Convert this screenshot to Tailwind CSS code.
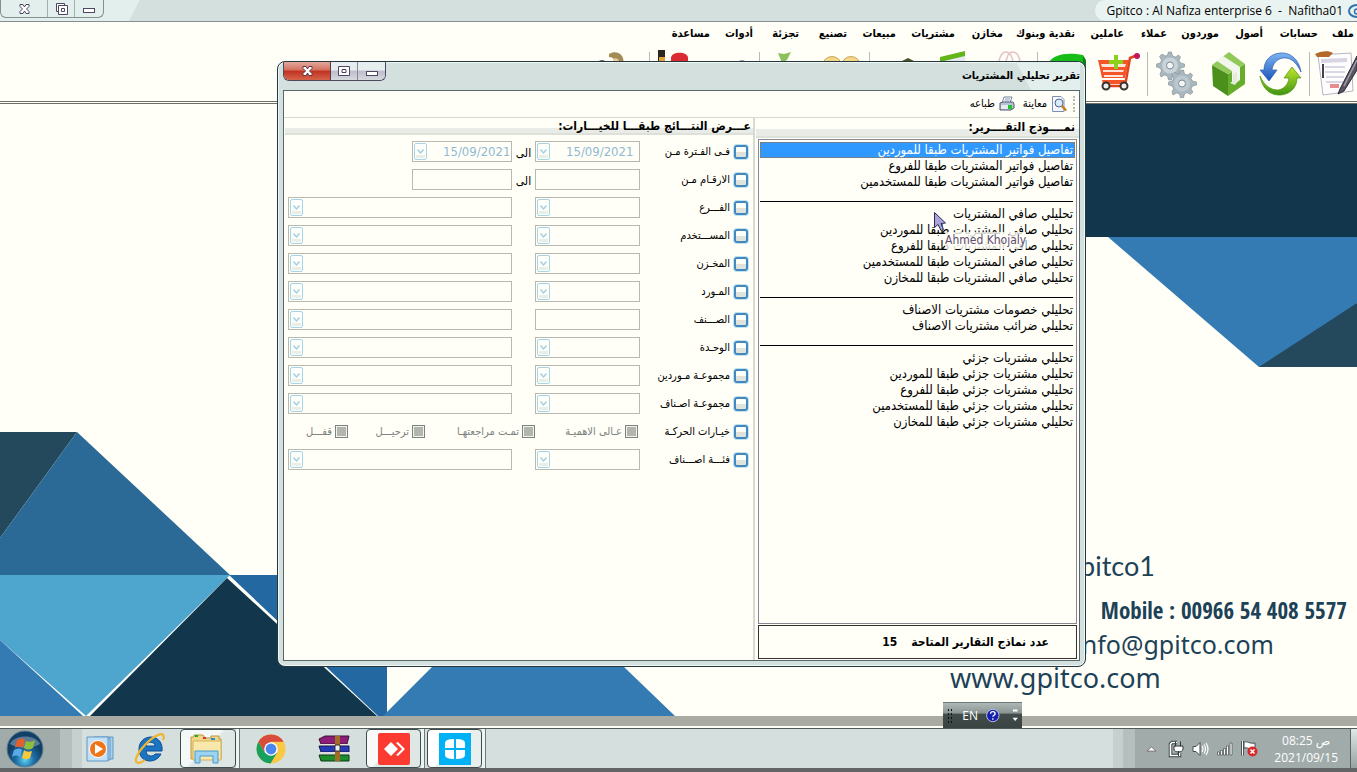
<!DOCTYPE html>
<html lang="ar">
<head>
<meta charset="utf-8">
<title>Gpitco</title>
<script src="https://cdn.jsdelivr.net/npm/@tailwindcss/browser@4"></script>
</head>
<body class="relative flex h-screen flex-col overflow-hidden bg-[#fffff8] font-['DejaVu_Sans_Condensed','DejaVu_Sans',sans-serif] text-black">

<svg class="hidden">
  <symbol id="chev" viewBox="0 0 13 17"><rect x=".5" y=".5" width="12" height="16" rx="1.5" fill="#fdfffa" stroke="#a9d3e6"/><rect x="2" y="12" width="9" height="3" fill="#e9eee6"/><path d="M3.5 6.5l3 3.500 3-3.500" fill="none" stroke="#a3cbe0" stroke-width="1.300"/></symbol>
</svg>

<!-- main window title bar -->
<header class="flex h-[22px] shrink-0 items-start justify-between border-b border-[#84908f] bg-[linear-gradient(117deg,#e3efed_0,#e3efed_124px,#d4e0de_125px)]">
  <div class="flex h-[18px] w-[104px] rounded-b-md border border-t-0 border-[#84908f] bg-[#e3efed]">
    <button aria-label="إغلاق" class="grid w-[47px] place-items-center border-r border-[#a3afae]"><svg width="11" height="10" viewBox="0 0 11 10"><path d="M1 .5h3L5.500 3 7 .5h3v2L7.500 5 10 7.500v2H7L5.500 7 4 9.500H1v-2L3.500 5 1 2.500z" fill="#fff" stroke="#4f4661"/></svg></button>
    <button aria-label="استعادة" class="grid w-[27px] place-items-center border-r border-[#a3afae]"><svg width="13" height="12" viewBox="0 0 13 12" fill="#fff" stroke="#4f4661"><path d="M1.500.5h8v8h-8z"/><path d="M3.500 2.500h9v9h-9z"/><path d="M6.500 5.500h3v3h-3z"/></svg></button>
    <button aria-label="تصغير" class="grid flex-1 place-items-center pt-1"><svg width="12" height="5" viewBox="0 0 12 5"><rect x=".5" y=".5" width="11" height="4" fill="#fff" stroke="#4f4661"/></svg></button>
  </div>
  <div class="flex h-[21px] items-center gap-1 rounded-l-full bg-[#e9f3f1] pl-3 font-['Open_Sans',sans-serif] text-xs">
    <span class="whitespace-pre">Gpitco : Al Nafiza enterprise 6  -  Nafitha01</span>
    <svg width="10" height="16" viewBox="0 0 10 16"><path d="M10 2C5 2 2 5 2 8s3 6 8 6" fill="none" stroke="#2f74ad" stroke-width="2"/><path d="M10 6a2.500 2.500 0 0 0 0 5" fill="none" stroke="#2f74ad" stroke-width="1.500"/></svg>
  </div>
</header>

<!-- menu -->
<nav dir="rtl" class="flex h-[24px] shrink-0 items-center pr-[3px] text-[11px] leading-4 font-bold whitespace-nowrap font-['DejaVu_Sans_Condensed','DejaVu_Sans',sans-serif]">
  <button class="w-9 text-right">ملف</button><button class="w-[55px] text-right">حسابات</button><button class="w-11 text-right">أصول</button><button class="w-[52px] text-right">موردون</button><button class="w-[43px] text-right">عملاء</button><button class="w-[49px] text-right">عاملين</button><button class="w-[72px] text-right">نقدية وبنوك</button><button class="w-12 text-right">مخازن</button><button class="w-[59px] text-right">مشتريات</button><button class="w-[49px] text-right">مبيعات</button><button class="w-12 text-right">تصنيع</button><button class="w-[46px] text-right">تجزئة</button><button class="w-[43px] text-right">أدوات</button><button class="text-right">مساعدة</button>
</nav>

<!-- toolbar -->
<div dir="rtl" class="flex h-[58px] shrink-0 items-start overflow-hidden border-b-3 border-double border-[#6e716b] pt-1">
  <button aria-label="تقرير" class="w-11 shrink-0"><svg width="44" height="48" viewBox="0 0 44 48"><path d="M5 5l33-2 2 38-30 4z" fill="#fdfdfd" stroke="#b9b5c4"/><path d="M8 9l26-1v4l-26 1z" fill="#d8d4e2"/><path d="M12 17h20M12 22h20M13 27h18M13 32h17" stroke="#b5b2c8"/><path d="M10 14v14" stroke="#44404e" stroke-width="2"/><rect x="17" y="34" width="9" height="4" fill="#e78d92"/><path d="M2 4c5-3 14-4 18-1l-4 4H4z" fill="#b4692b"/><path d="M44 6L27 39l-2 5 6-3L44 20z" fill="#5a5562" stroke="#2d2933"/><path d="M44 10L31 36" stroke="#a29dab" stroke-width="1.500"/></svg></button>
  <i class="mx-0.5 mt-0.5 h-11 w-0.5 shrink-0 border-l border-[#b5bbb6]"></i>
  <button aria-label="تحديث" class="grid w-[52px] shrink-0 place-items-center"><svg width="44" height="48" viewBox="0 0 44 48"><defs><linearGradient id="bl" x2="0" y2="1"><stop stop-color="#7db5f2"/><stop offset="1" stop-color="#1c54b8"/></linearGradient><linearGradient id="gr" x2="0" y2="1"><stop stop-color="#c0e62c"/><stop offset="1" stop-color="#3f9410"/></linearGradient></defs><path d="M42 22C40 9 31 2 21 3 11 4 5 11 5 20H1l9 11 8-11h-5c1-7 5-11 11-12 8-1 14 5 18 14z" fill="url(#bl)" stroke="#2a5fb4" stroke-width=".7"/><path d="M1 26c2 13 11 20 21 19 10-1 16-8 16-17h4L33 17l-8 11h5c-1 7-5 11-11 12C11 40 5 35 1 26z" fill="url(#gr)" stroke="#4c9413" stroke-width=".7"/></svg></button>
  <button aria-label="أصناف" class="grid w-[52px] shrink-0 place-items-center"><svg width="36" height="48" viewBox="0 0 36 48"><path d="M1 15L17 24V46L2 36z" fill="#4b901d"/><path d="M17 24L34 14v20L17 46z" fill="#65ad2a"/><path d="M1 15L18 2l16 12-17 10z" fill="#92c95b"/><path d="M6 11l6-5 17 11v13l-4 3-1-1-3 2v-13z" fill="#f2f6ec"/><path d="M22 24l4-2v8l3-2-5 7-5-2 3-2z" fill="#e4ecd9"/></svg></button>
  <button aria-label="إعدادات" class="grid w-[52px] shrink-0 place-items-center"><svg width="42" height="48" viewBox="0 0 42 48"><g fill="#a9b7be" stroke="#7c8b94" stroke-width=".6"><path id="gear" d="M12.500 2h3l1 4 3 1 3-2 2 2-1.500 3.500 1.500 2.500 4 1v3l-4 1-1.500 3 2 3-2.500 2.500-3.500-2-2.500 1.500-1 4h-3l-1-4-3-1-3.500 2L4 24l1.500-3.500L4 18l-3.500-1v-3l4-1 1-3-2-3.500L6 4l3.500 2L11.500 5z"/><use href="#gear" x="12" y="18"/></g><circle cx="14" cy="15.500" r="8" fill="#c9d3d8"/><circle cx="14" cy="15.500" r="3.500" fill="#f3f6f6" stroke="#7c8b94"/><circle cx="26" cy="33.500" r="8" fill="#bcc8ce"/><circle cx="26" cy="33.500" r="3.500" fill="#f3f6f6" stroke="#7c8b94"/></svg></button>
  <i class="mx-0.5 mt-0.5 h-11 w-0.5 shrink-0 border-l border-[#b5bbb6]"></i>
  <button aria-label="مشتريات" class="grid w-[52px] shrink-0 place-items-center"><svg width="44" height="48" viewBox="0 0 44 48"><path d="M38 6l-5 2-5 28H6" fill="none" stroke="#e2431c" stroke-width="2.500"/><path d="M1 10h31l-4 18H5z" fill="#f4552a"/><path d="M4 14h25l-1 3H5zM6 20h21l-1 2H6zM7 25h19v2H7z" fill="#fde5d8"/><path d="M17 5h4v5h5v4h-5v5h-4v-5h-5v-4h5z" fill="#8bd01c"/><path d="M5 30h23v4H6z" fill="#f4552a"/><circle cx="40" cy="6" r="3" fill="#c2185b"/><g fill="#eee" stroke="#3b3030" stroke-width="2"><circle cx="9" cy="36" r="3.500"/><circle cx="27" cy="36" r="3.500"/></g></svg></button>
  <button aria-label="شحن" class="grid w-[52px] shrink-0 place-items-center"><svg width="40" height="48" viewBox="0 0 40 48"><path d="M2 12C7 5 18 2 36 5l3 5v18H2z" fill="#16bd16"/><path d="M36 6l3 5v18h-3z" fill="#0c7d16"/></svg></button>
  <i class="mx-0.5 mt-0.5 h-11 w-0.5 shrink-0 border-l border-[#b5bbb6]"></i>
  <button aria-label="مبيعات" class="grid w-[54px] shrink-0 place-items-center"><svg width="38" height="48" viewBox="0 0 38 48"><path d="M2 11h34v25H2z" fill="#c5454f"/><path d="M10 14c0-16 14-16 14 0M17 14c0-16 14-16 14 0" fill="none" stroke="#e3c4c8" stroke-width="1.500"/></svg></button>
  <button aria-label="فواتير" class="grid w-[54px] shrink-0 place-items-center"><svg width="44" height="48" viewBox="0 0 44 48"><path d="M8 9l25-5 2 30H8z" fill="#e6e9ee"/><path d="M8 7l25-6v5L8 12z" fill="#63b51a"/></svg></button>
  <button aria-label="قيود" class="grid w-[54px] shrink-0 place-items-center"><svg width="40" height="48" viewBox="0 0 40 48"><path d="M20 12l8-4 6 3v10H20z" fill="#4b5426"/></svg></button>
  <i class="mx-0.5 mt-0.5 h-11 w-0.5 shrink-0 border-l border-[#b5bbb6]"></i>
  <button aria-label="عملاء" class="grid w-[52px] shrink-0 place-items-center"><svg width="40" height="48" viewBox="0 0 40 48"><g fill="#f4d78a" stroke="#caa457"><circle cx="11" cy="16" r="9.500"/><circle cx="30" cy="16" r="9.500"/></g></svg></button>
  <button aria-label="تجزئة" class="grid w-[52px] shrink-0 place-items-center"><svg width="40" height="48" viewBox="0 0 40 48"><path d="M9 3l6 1 7-2-4 8-5 3z" fill="#8cc05c"/></svg></button>
  <i class="mx-0.5 mt-0.5 h-11 w-0.5 shrink-0 border-l border-[#b5bbb6]"></i>
  <button aria-label="أدوات" class="grid w-[52px] shrink-0 place-items-center"><svg width="40" height="48" viewBox="0 0 40 48"><circle cx="31" cy="15" r="5" fill="#8aa4a8"/></svg></button>
  <button aria-label="موظفون" class="grid w-[52px] shrink-0 place-items-center"><svg width="44" height="48" viewBox="0 0 44 48"><path d="M1 0h7v14H1z" fill="#2b2622"/><path d="M2 7h6v6H2z" fill="#dda23a"/><path d="M14 8c0-7 17-7 17 0v6H14z" fill="#dc2a32"/></svg></button>
  <i class="mx-0.5 mt-0.5 h-11 w-0.5 shrink-0 border-l border-[#b5bbb6]"></i>
  <button aria-label="مستخدم" class="grid w-[64px] shrink-0 place-items-center"><svg width="44" height="48" viewBox="0 0 44 48"><path d="M16 4c8-5 17 1 14 12h-7c0-6-3-9-7-9z" fill="#a28b55"/><path d="M20 9c3-2 7 0 7 6h-6z" fill="#edc9a1"/><circle cx="9" cy="14" r="4" fill="#5e6264"/></svg></button>
</div>

<!-- wallpaper -->
<main class="relative min-h-0 flex-1 overflow-hidden">
  <svg class="block h-full w-full" viewBox="0 104 1357 612" preserveAspectRatio="none" shape-rendering="geometricPrecision">
    <path d="M1000 104h357v133h-357z" fill="#12364b"/>
    <path d="M1108 237h249v66l-70 64h-28z" fill="#357bb3"/>
    <path d="M1000 237h107l-20 0z" fill="#12364b"/>
    <path d="M1357 303v64h-98z" fill="#24485c"/>
    <path d="M1357 303l-54 64h-16z" fill="#24485c"/>
    <path d="M0 432h77L0 538z" fill="#24485c"/>
    <path d="M77 432l153 143H0v-37z" fill="#2b6a97"/>
    <path d="M0 575h230L86 716 0 640z" fill="#4ea5ce"/>
    <path d="M0 640l83 76H0z" fill="#357bb3"/>
    <path d="M229 575h158v141h-9z" fill="#2368a0"/>
    <path d="M227 578l150 138H90z" fill="#12364b"/>
    <path d="M433 666h190l52 50H383z" fill="#357bb3"/>
  </svg>
  <div class="absolute inset-y-0 right-0 w-[407px] overflow-hidden font-['Noto_Sans',sans-serif] whitespace-nowrap text-[#1d4257]">
    <p class="absolute top-[442px] left-[116px] font-['Lato',sans-serif] text-[27px] leading-10">gpitco1</p>
    <p class="absolute top-[486px] right-[10px] font-['Open_Sans_Condensed','Noto_Sans_Condensed','Open_Sans',sans-serif] text-[23px] leading-10">Mobile : 00966 54 408 5577</p>
    <p class="absolute top-[520px] right-[83px] text-[25px] leading-10">info@gpitco.com</p>
    <p class="absolute top-[554px] left-0 text-[27px] leading-10">www.gpitco.com</p>
  </div>
</main>
<div class="h-2.5 shrink-0 bg-[#a9aba2]"></div>
<div class="h-0.5 shrink-0 bg-[#fffff8]"></div>

<!-- taskbar -->
<footer class="flex h-11 shrink-0 items-stretch justify-between border-t border-b-4 border-t-[#505a5a] border-b-[#626466] bg-[#d5e0de]">
  <div class="flex items-stretch">
    <button aria-label="ابدأ" class="grid w-[60px] place-items-center bg-[#a1acaa] pr-2.5"><svg width="38" height="38" viewBox="0 0 38 38"><defs><radialGradient id="orb" cx=".5" cy=".8"><stop stop-color="#5fd4f2"/><stop offset=".5" stop-color="#1f6ea4"/><stop offset="1" stop-color="#123f66"/></radialGradient></defs><circle cx="19" cy="19" r="18" fill="url(#orb)" stroke="#5d7f92"/><path d="M4 14C8 4 30 4 34 14c-8 5-22 5-30 0z" fill="#fff" opacity=".3"/><path d="M11 10c3-2 6-2 8 0l-2 8c-3-2-5-2-8 0z" fill="#e3602c"/><path d="M20 11c3 1 6 1 9-1l-2 8c-3 2-6 2-9 0z" fill="#8cbf3e"/><path d="M8 20c3-2 6-2 8 0l-2 7c-3-2-5-2-8 0z" fill="#5aa9e8"/><path d="M18 20c2 2 5 2 8 1l-2 7c-3 2-6 1-8 0z" fill="#f8c93c"/></svg></button>
    <i class="w-3 bg-[#b5bfbd]"></i><i class="w-2.5 bg-[#c6d1cf]"></i>
    <div class="flex items-center">
      <button aria-label="Media Player" class="grid w-[36px] place-items-center pr-3"><svg class="ml-1" width="30" height="30" viewBox="0 0 30 30"><g fill="#a8d1ef" stroke="#5f97c7"><path d="M8 3h19v22H8z"/><path d="M5 4h19v22H5z"/><path d="M1 3h21v24H1z" fill="#c3e0f4"/></g><circle cx="12" cy="15" r="8.500" fill="#ee7418" stroke="#fff"/><path d="M9 10l8 5-8 5z" fill="#fff"/></svg></button>
      <button aria-label="Internet Explorer" class="grid w-[64px] place-items-center"><svg width="34" height="34" viewBox="0 0 34 34"><path d="M28 22c-2 4-6 7-11 7C10 29 6 24 6 17S11 5 18 5c7 0 12 6 11 14H13c0 6 8 6 9 3zM13 14h9c0-5-9-5-9 0z" fill="#1b74c2" stroke="#0e4c91" fill-rule="evenodd"/><path d="M30 8c2-5 0-7-5-5C16 7 5 19 3 27c-1 5 4 5 9 1" fill="none" stroke="#f1b52b" stroke-width="2.200"/></svg></button>
    </div>
    <button aria-label="Explorer" class="-ml-0.5 grid w-[56px] place-items-center rounded-sm border border-[#3e4c4e] bg-[linear-gradient(135deg,#f4f8f6_45%,#dfe7e5_50%)] pr-1"><svg width="34" height="34" viewBox="0 0 34 34"><path d="M2 5h3V3h9l2 3h6V4h8v3h2v20H2z" fill="#f2d886" stroke="#b99540"/><path d="M4 9h28v19H4z" fill="#f9e8ab" stroke="#d3b25d"/><path d="M6 3h3v2H6z" fill="#27a627"/><path d="M14 5h3v2h-3z" fill="#d33"/><path d="M22 6h4v2h-4z" fill="#2c88d8"/><path d="M6 31V19h23v12h-5v-7H11v7z" fill="#9bd3f0" stroke="#4a9bcb"/></svg></button>
    <i class="w-1 border-r border-[#6f7b7b] bg-[#eef4f2]"></i>
    <button aria-label="Chrome" class="grid w-[62px] place-items-center"><svg width="32" height="32" viewBox="0 0 32 32"><circle cx="16" cy="16" r="14.500" fill="#fbc843"/><path d="M3.400 8.800A14.500 14.500 0 0 1 28.600 8.800H16L9.800 19.600z" fill="#d94b3d"/><path d="M3.400 8.800A14.500 14.500 0 0 0 15.500 30.500L22.200 19.600H9.800z" fill="#18a05e"/><circle cx="16" cy="16" r="6.800" fill="#fff"/><circle cx="16" cy="16" r="5.400" fill="#4a86f0"/></svg></button>
    <button aria-label="WinRAR" class="grid w-[64px] place-items-center"><svg width="34" height="28" viewBox="0 0 34 28"><path d="M2 4L8 1h24l-2 8H4z" fill="#8c1e78" stroke="#3b1034"/><path d="M3 9h29v5H3z" fill="#e8e2d6"/><path d="M2 11h30v6H4z" fill="#2839b8" stroke="#12184f"/><path d="M3 17h29v3H3z" fill="#ddd"/><path d="M2 20h30v6H4z" fill="#1d8c2c" stroke="#0b3d12"/><path d="M18 1h5v25h-5z" fill="#a36c24"/><path d="M18 10h5v6h-5z" fill="#eee" stroke="#333"/></svg></button>
    <button aria-label="AnyDesk" class="grid w-[55px] place-items-center rounded-sm border border-[#3e4c4e] bg-[linear-gradient(135deg,#f7faf9_45%,#dfe7e5_50%)]"><svg width="32" height="32" viewBox="0 0 32 32"><rect width="32" height="32" rx="2" fill="#fb3a31"/><path d="M13 9l7 7-7 7-7-7z" fill="#fff"/><path d="M18 10l2-1 7 7-7 7-2-1 6-6z" fill="#fff"/></svg></button>
    <i class="mr-1 w-1 border-r border-[#6f7b7b] bg-[#eef4f2]"></i>
    <button aria-label="Windows" class="-ml-0.5 grid w-[55px] place-items-center rounded-sm border border-[#3e4c4e] bg-[linear-gradient(135deg,#fff_45%,#e9efed_50%)]"><svg width="32" height="32" viewBox="0 0 32 32"><path d="M0 0h32v32H0z" fill="#00b2f5"/><path d="M6 10q0-4 9-4v9H6zM17 6q9 0 9 4v5h-9zM6 17h9v9q-9 0-9-4zM17 17h9v5q0 4-9 4z" fill="#fff"/></svg></button>
    <i class="w-1 border-r border-[#6f7b7b] bg-[#eef4f2]"></i>
  </div>
  <div class="flex items-stretch">
    <i class="w-2.5 bg-[#c6d1cf]"></i><i class="w-3 bg-[#b5bfbd]"></i>
    <div class="flex items-center gap-2 bg-[#a1acaa] pr-3 pl-3">
      <svg width="9" height="6" viewBox="0 0 9 6"><path d="M0 5l4.500-4L9 5z" fill="#fff" stroke="#5b5168" stroke-width=".7"/></svg>
      <svg class="ml-1" width="16" height="18" viewBox="0 0 16 18"><path d="M9 2.500H4L2.500 4v11.500h9V13" fill="none" stroke="#323a3c" stroke-width="3.500"/><path d="M9 2.500H4L2.500 4v11.500h9V13" fill="none" stroke="#fff" stroke-width="1.700"/><path d="M6 6h9v3c0 4-9 4-9 0zM7.500 1.500v5m5-5v5M10.500 11v5" fill="#fff" stroke="#323a3c"/></svg>
      <svg width="17" height="16" viewBox="0 0 17 16"><path d="M1 5.500h3l4-4v13l-4-4H1z" fill="#fff" stroke="#444e50"/><path d="M10 5q2 3 0 6M12 3.500q3 4.500 0 9M14 2q4 6 0 12" fill="none" stroke="#fff" stroke-width="1.200"/></svg>
      <svg width="16" height="14" viewBox="0 0 16 14"><g fill="#fff" stroke="#444e50" stroke-width=".7"><path d="M.5 10h2v3h-2zM3.500 8.500h2V13h-2zM6.500 6.500h2V13h-2zM9.500 4h2v9h-2zM13 1h2v12h-2z"/></g></svg>
      <svg width="17" height="17" viewBox="0 0 17 17"><path d="M1.500 1v14.500" stroke="#323a3c" stroke-width="2.500"/><path d="M1.500 1v14.500" stroke="#fff"/><path d="M3 2c4-1 5 2 11 1v6c-5 1-7-2-11-1z" fill="#fff" stroke="#444e50"/><circle cx="11.500" cy="11.500" r="5" fill="#d8292b"/><path d="M9.500 9.500l4 4m0-4l-4 4" stroke="#fff" stroke-width="1.500"/></svg>
      <div class="ml-2 text-center font-['Open_Sans','DejaVu_Sans',sans-serif] text-xs leading-[17px] text-white"><p dir="ltr">08:25 ص</p><p>2021/09/15</p></div>
    </div>
    <button aria-label="سطح المكتب" class="w-[7px] border-l border-[#5b6666] bg-[linear-gradient(#dfe8e6,#98a3a1)]"></button>
  </div>
</footer>

<!-- language bar -->
<div class="absolute bottom-11 left-[943px] flex h-[26px] w-[79px] items-center gap-2 border-t border-[#6d7879] bg-[linear-gradient(#aeb8b6_0,#8a9593_40%,#424c4b_45%,#394342)] px-1 font-['Open_Sans',sans-serif] text-xs text-white">
  <i class="h-4 w-2 bg-[radial-gradient(#0c1212_1px,transparent_1px)] bg-[length:3px_4px]"></i>
  <span>EN</span>
  <svg width="15" height="15" viewBox="0 0 15 15"><circle cx="7.500" cy="7.500" r="6.800" fill="#1420b0" stroke="#c3c9e8"/><path d="M5 5.500c0-3 5-3 5 0 0 2-2.500 1.500-2.500 3.500M7.500 10.500v1.700" fill="none" stroke="#fff" stroke-width="1.500"/></svg>
  <svg class="ml-1" width="7" height="15" viewBox="0 0 7 15" fill="#fff"><path d="M1 1h5v2H1zM.5 10h6l-3 3.500z"/></svg>
</div>

<!-- report dialog -->
<section dir="rtl" class="absolute top-[61px] left-[277px] flex h-[606px] w-[809px] flex-col rounded-lg border border-[#26383d] bg-[#d3e0de] px-[5px] pb-[5px] shadow-[inset_0_0_0_1px_#eef7f5]">
  <div class="flex h-7 shrink-0 items-start justify-between bg-[linear-gradient(62deg,transparent_0,transparent_660px,#e3efed_661px)]">
    <h1 class="pt-1.5 text-[11px] leading-4 font-bold">تقرير تحليلي المشتريات</h1>
    <div dir="ltr" class="flex h-[19px] w-[103px] overflow-hidden rounded-b-md border border-t-0 border-[#4c4a5e]">
      <button aria-label="إغلاق" class="grid w-[47px] place-items-center border-r border-[#5b3c46] bg-[linear-gradient(#e2a79b_0,#d4705f_45%,#bf3220_50%,#d5634b)]"><svg width="11" height="10" viewBox="0 0 11 10"><path d="M1 .5h3L5.500 3 7 .5h3v2L7.500 5 10 7.500v2H7L5.500 7 4 9.500H1v-2L3.500 5 1 2.500z" fill="#fff" stroke="#5b3a48"/></svg></button>
      <button aria-label="تكبير" class="grid w-[27px] place-items-center border-r border-[#8a8799] bg-[linear-gradient(#e6edee_45%,#bdbccb_50%,#d6dade)]"><svg width="12" height="10" viewBox="0 0 12 10" fill="#fff" stroke="#4f4661"><path d="M.5.5h11v9H.5z"/><path d="M4 3.500h4v3H4z"/></svg></button>
      <button aria-label="تصغير" class="grid flex-1 place-items-center bg-[linear-gradient(#e6edee_45%,#bdbccb_50%,#d6dade)] pt-1"><svg width="12" height="5" viewBox="0 0 12 5"><rect x=".5" y=".5" width="11" height="4" fill="#fff" stroke="#4f4661"/></svg></button>
    </div>
  </div>
  <div class="flex min-h-0 flex-1 flex-col border border-[#55686b] bg-[#fffff8]">
    <div class="flex h-[26px] shrink-0 items-center gap-1 pr-1 text-[11px] leading-4">
      <i class="h-4 w-1 border-r-2 border-dotted border-[#b9bdb6]"></i>
      <button class="flex items-center gap-1"><svg width="16" height="16" viewBox="0 0 16 16"><path d="M1.500.5H10l3 3v12H1.500z" fill="#f4f7fd" stroke="#7f8eb5"/><circle cx="8" cy="7" r="4" fill="#d7ebf7" stroke="#56658b"/><path d="M11 10l4 4.500" stroke="#c77c28" stroke-width="2.500"/></svg>معاينة</button>
      <button class="mr-1 flex items-center gap-1"><svg width="16" height="16" viewBox="0 0 16 16"><path d="M5 1h8l-2 6H3z" fill="#fff" stroke="#7584a3"/><path d="M1 7l3-1h10l1 2v4l-3 2H1z" fill="#bac3d3" stroke="#4f5a73"/><path d="M2 9h9v4H2z" fill="#e5e9f0"/><path d="M9 9h4v4H9z" fill="#22c42e"/><path d="M6 3h5M5.500 5h5" stroke="#8593b5"/></svg>طباعه</button>
    </div>
    <div class="flex min-h-0 flex-1">
      <section class="flex w-[324px] shrink-0 flex-col border-t border-[#d5dad2] pl-px">
        <h2 class="h-5 shrink-0 border-b-2 border-[#dde1da] bg-[linear-gradient(transparent_60%,#e9ece6_60%)] pr-1 text-[12px] leading-[18px] font-bold">نمــــوذج التقــــرير:</h2>
        <div id="reports" class="mt-px ml-[2px] mr-0.5 flex min-h-0 flex-1 flex-col border border-[#8a8793] px-px pt-0.5 text-[13px] leading-4"></div>
        <p class="mt-px ml-[2px] mr-0.5 mb-px flex h-[34px] shrink-0 items-center gap-3.5 border border-[#33312f] pr-[27px] text-[12px] font-bold"><span>عدد نماذج التقارير المتاحة</span><span>15</span></p>
      </section>
      <section class="min-w-0 flex-1 border-t border-r-2 border-[#d5dad2]">
        <h2 class="ml-px h-[17px] border-b-2 border-[#dde1da] bg-[linear-gradient(transparent_65%,#e9ece6_65%)] pr-0.5 text-[12px] leading-4 font-bold">عـــرض النتـــائج طبقـــا للخيـــارات:</h2>
        <form id="filters" class="flex flex-col gap-[7px] pt-[6px] pr-[5px] pl-[4px] text-[11px] leading-4"></form>
      </section>
    </div>
  </div>
</section>

<!-- remote user pointer -->
<div class="pointer-events-none absolute top-[212px] left-[934px] flex items-start">
  <svg width="12" height="20" viewBox="0 0 12 20"><path d="M.5.5v15l3.500-3 3 6 2.500-1-2.500-6 4.500-.5z" fill="#a9a4dc" stroke="#2c2850"/></svg>
  <span class="mt-5 -ml-px bg-[#fffff8]/80 font-['DejaVu_Sans_Condensed','DejaVu_Sans',sans-serif] text-xs leading-[17px] whitespace-nowrap text-[#5c4c70]">Ahmed Khojaly</span>
</div>

<script>
const reports = ['تفاصيل فواتير المشتريات طبقا للموردين','تفاصيل فواتير المشتريات طبقا للفروع','تفاصيل فواتير المشتريات طبقا للمستخدمين','',
'تحليلي صافي المشتريات','تحليلي صافي المشتريات طبقا للموردين','تحليلي صافي المشتريات طبقا للفروع','تحليلي صافي المشتريات طبقا للمستخدمين','تحليلي صافي المشتريات طبقا للمخازن','',
'تحليلي خصومات مشتريات الاصناف','تحليلي ضرائب مشتريات الاصناف','',
'تحليلي مشتريات جزئي','تحليلي مشتريات جزئي طبقا للموردين','تحليلي مشتريات جزئي طبقا للفروع','تحليلي مشتريات جزئي طبقا للمستخدمين','تحليلي مشتريات جزئي طبقا للمخازن'];
document.getElementById('reports').innerHTML = reports.map((r, i) =>
  r === '' ? '<div class="h-4 shrink-0 pt-[11px] pr-0.5"><hr class="border-black"></div>'
  : i === 0 ? `<button class="h-4 shrink-0 bg-[#3099ff] pr-0.5 text-right whitespace-nowrap text-white outline-1 -outline-offset-1 outline-dotted outline-[#b06a28]">${r}</button>`
  : `<button class="h-4 shrink-0 pr-0.5 text-right whitespace-nowrap">${r}</button>`).join('');

const combo = (label, value = '') => `<span class="relative block h-[21px]"><select disabled aria-label="${label}" dir="ltr" class="block h-full w-full appearance-none border border-[#b6bab3] bg-[#fffff8] pr-0.5 pl-[30px] text-[13px] text-[#8fb9d3] opacity-100"><option>${value}</option></select><svg class="absolute top-0.5 left-0.5" width="13" height="17"><use href="#chev"/></svg></span>`;
const box = label => `<input disabled aria-label="${label}" class="block h-[21px] w-full border border-[#b6bab3] bg-[#fffff8]">`;
const check = '<input type="checkbox" class="size-[14px] shrink-0 appearance-none rounded-[3px] border-2 border-[#4489bd] bg-[linear-gradient(#fdfffa_50%,#dfe3dc_50%)] shadow-[0_0_0_1px_#bfe2f4]">';
const off = t => `<label class="flex items-center gap-[3px] whitespace-nowrap text-[#7e827f]"><input type="checkbox" disabled class="size-[13px] shrink-0 appearance-none border border-[#7e827c] bg-[#b3b6ae] shadow-[inset_0_0_0_1px_#f2f3ec]">${t}</label>`;
const rows = [['فـى الفـترة مـن','date'],['الارقـام مـن','num'],['الفـــرع','cc'],['المســـتخدم','cc'],['المخـزن','cc'],['المـورد','cc'],['الصـــنف','tc'],['الوحـدة','cc'],['مجموعـة مـوردين','cc'],['مجموعـة اصـناف','cc'],['خيـارات الحركـة','opt'],['فئـــة اصـــناف','cc']];
document.getElementById('filters').innerHTML = rows.map(([t, k]) => {
  const head = `<label class="flex items-center gap-1 whitespace-nowrap">${check}<span>${t}</span></label>`;
  if (k === 'opt') return `<div class="grid h-[21px] grid-cols-[110px_1fr]">${head}<div class="grid grid-cols-[103px_110px_77px_1fr]">${off('عـالى الاهميـة')}${off('تمـت مراجعتهـا')}${off('ترحيـــل')}${off('قفـــل')}</div></div>`;
  const a = k === 'date' ? combo(t, '15/09/2021') : k === 'num' || k === 'tc' ? box(t) : combo(t);
  const two = k === 'date' || k === 'num';
  const b = k === 'date' ? combo('الى', '15/09/2021') : k === 'num' ? box('الى') : combo(t);
  return `<div class="grid grid-cols-[108px_105px_23px_1fr]">${head}${a}<span class="pt-1 text-center text-xs leading-4">${two ? 'الى' : ''}</span>${two ? `<div class="w-[100px]">${b}</div>` : b}</div>`;
}).join('');
</script>
</body>
</html>
